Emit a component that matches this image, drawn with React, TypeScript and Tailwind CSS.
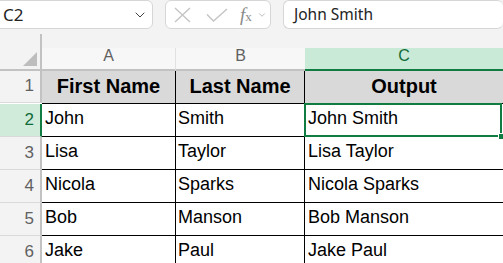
import React from 'react';
import { ChevronDown } from 'lucide-react';

interface Row {
  num: number;
  first: string;
  last: string;
  output: string;
}

const rows: Row[] = [
  { num: 2, first: 'John', last: 'Smith', output: 'John Smith' },
  { num: 3, first: 'Lisa', last: 'Taylor', output: 'Lisa Taylor' },
  { num: 4, first: 'Nicola', last: 'Sparks', output: 'Nicola Sparks' },
  { num: 5, first: 'Bob', last: 'Manson', output: 'Bob Manson' },
  { num: 6, first: 'Jake', last: 'Paul', output: 'Jake Paul' },
];

const cellFont = { fontFamily: '"Liberation Sans", Arial, sans-serif' };
const uiFont = { fontFamily: '"Noto Sans", "Open Sans", sans-serif' };

const FormulaBar: React.FC = () => (
  <div className="flex h-[34px] items-start gap-3 bg-[#f3f3f3]" style={uiFont}>
    <div className="-ml-2 flex h-[29px] w-[161px] items-center justify-between rounded-md border border-[#d6d6d6] bg-white pl-[10px] pr-[4px]">
      <span className="text-[17px] text-[#242424]">C2</span>
      <ChevronDown className="h-4 w-4 text-[#424242]" strokeWidth={1.5} />
    </div>
    <div className="flex h-[29px] w-[106px] items-center rounded-md border border-[#d6d6d6] bg-white pl-[8px]">
      <svg width="17" height="16" viewBox="0 0 17 16" className="text-[#c4c4c4]">
        <path d="M1 1 16 15M16 1 1 15" stroke="currentColor" strokeWidth="1.4" fill="none" />
      </svg>
      <svg width="22" height="14" viewBox="0 0 22 14" className="ml-[15px] mt-[1px] text-[#c4c4c4]">
        <path d="M1 6.5 7.5 13 21 1" stroke="currentColor" strokeWidth="1.4" fill="none" />
      </svg>
      <span className="ml-[12px] text-[19px] italic leading-none text-[#8a8a8a]" style={{ fontFamily: '"Liberation Serif", serif' }}>
        f<span className="text-[13px] not-italic">x</span>
      </span>
      <ChevronDown className="ml-[5px] h-[10px] w-[10px] text-[#b0b0b0]" strokeWidth={2} />
    </div>
    <div className="flex h-[29px] flex-1 items-center rounded-md border border-r-0 border-[#d6d6d6] bg-white pl-[10px]">
      <span className="text-[15.5px] text-[#242424]">John Smith</span>
    </div>
  </div>
);

const ColumnHeaders: React.FC = () => (
  <div className="flex">
    <div className="relative h-[37px] w-[42px] shrink-0 border-r-2 border-b-2 border-[#c2c2c2] bg-[#f3f3f3]">
      <div className="absolute bottom-[3px] right-[3px] h-0 w-0 border-b-[14px] border-l-[14px] border-b-[#bdbdbd] border-l-transparent" />
    </div>
    <div className="flex flex-1 flex-col">
      <div className="h-[14px] bg-[#f3f3f3]" />
      <div className="flex h-[23px] text-[16px]" style={cellFont}>
        <div className="flex w-[134px] items-end justify-center border-r border-b-2 border-r-[#e1e1e1] border-b-[#c2c2c2] bg-[#f7f7f7] pb-[1px] text-[#616161]">A</div>
        <div className="flex w-[129px] items-end justify-center border-b-2 border-b-[#c2c2c2] bg-[#f7f7f7] pb-[1px] text-[#616161]">B</div>
        <div className="flex flex-1 items-end justify-center border-b-2 border-[#107c41] bg-[#caead8] pb-[1px] text-[#0f6c38]">C</div>
      </div>
    </div>
  </div>
);

const RowHeader: React.FC<{ num: number; active?: boolean; h: string }> = ({ num, active, h }) => (
  <div
    className={`flex w-[42px] shrink-0 items-end justify-end border-b border-b-[#dadada] pr-[6px] pb-[4px] text-[17px] ${h} ${
      active ? 'border-r-2 border-r-[#107c41] bg-[#d1ebdb] text-[#0f6c38]' : 'border-r-2 border-r-[#c2c2c2] bg-[#f3f3f3] text-[#616161]'
    }`}
  >
    {num}
  </div>
);

export default function App() {
  return (
    <div className="h-[263px] w-[503px] overflow-hidden bg-white" style={cellFont}>
      <FormulaBar />
      <ColumnHeaders />

      {/* header row */}
      <div className="flex">
        <RowHeader num={1} h="h-[32px]" />
        <div className="flex flex-1 border-b border-black bg-[#d9d9d9] text-[20px] font-bold text-black">
          <div className="flex w-[134px] items-end justify-center border-r border-black pb-[2px]">First Name</div>
          <div className="flex w-[129px] items-end justify-center border-r border-black pb-[2px]">Last Name</div>
          <div className="flex flex-1 items-end justify-center pb-[2px]">Output</div>
        </div>
      </div>

      {rows.map((r, i) => (
        <div key={r.num} className="flex">
          <RowHeader num={r.num} active={i === 0} h="h-[33px]" />
          <div className="flex flex-1 border-b border-black text-[18px] text-black">
            <div className="flex w-[134px] items-end border-r border-black pb-[4px] pl-[3px]">{r.first}</div>
            <div className="flex w-[129px] items-end border-r border-black pb-[4px] pl-[2px]">{r.last}</div>
            <div className="relative flex flex-1 items-end pb-[4px] pl-[3px]">
              {r.output}
              {i === 0 && (
                <>
                  <div className="absolute -top-[1px] -left-[1px] bottom-[-1px] right-[1px] border-2 border-[#107c41]" />
                  <div className="absolute -bottom-[3px] right-0 h-[5px] w-[4px] bg-[#107c41] outline outline-1 outline-white" />
                </>
              )}
            </div>
          </div>
        </div>
      ))}
    </div>
  );
}
